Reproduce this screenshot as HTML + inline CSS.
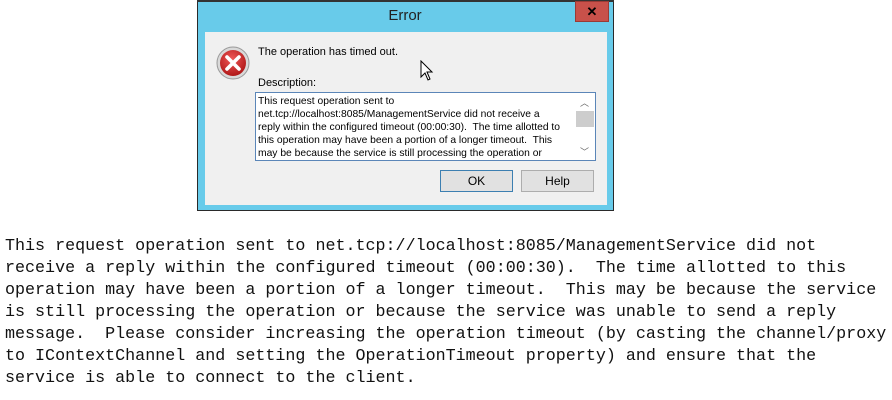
<!DOCTYPE html>
<html><head><style>
body{margin:0;width:892px;height:400px;background:#fff;position:relative;overflow:hidden;font-family:"Liberation Sans",sans-serif}
.a{position:absolute}
.mono{font-family:"Liberation Mono",monospace;font-size:16.7px;line-height:22px;color:#111;white-space:pre;left:5px;top:236px}
.ui{font-size:11px;color:#000}
</style></head><body>
<div class="a" style="left:197px;top:0;width:417px;height:211px;background:#68cbea;border:1px solid #2a2a2a;box-sizing:border-box"></div>
<div class="a" style="left:197px;top:0;width:417px;height:2px;background:#333"></div>
<div class="a" style="left:205px;top:32px;width:402px;height:173px;background:#f0f0f0"></div>
<div class="a" style="left:385px;top:7px;width:40px;text-align:center;font-size:15px;color:#222">Error</div>
<div class="a" style="left:575px;top:1px;width:34px;height:21px;background:#c8514a;border:1px solid #9a3a35;box-sizing:border-box;color:#000;font-weight:bold;font-size:13px;text-align:center;line-height:19px">✕</div>
<svg class="a" style="left:216px;top:46px" width="34" height="34" viewBox="0 0 34 34">
<defs><radialGradient id="g" cx="45%" cy="35%" r="65%"><stop offset="0" stop-color="#f05858"/><stop offset="1" stop-color="#b01818"/></radialGradient></defs>
<circle cx="17" cy="17" r="16" fill="#d9d9d9" stroke="#999"/>
<circle cx="17" cy="17" r="13" fill="url(#g)"/>
<path d="M11 11L23 23M23 11L11 23" stroke="#fff" stroke-width="3.6" stroke-linecap="round"/>
</svg>
<div class="a ui" style="left:258px;top:46px">The operation has timed out.</div>
<div class="a ui" style="left:258px;top:77px">Description:</div>
<div class="a" style="left:255px;top:92px;width:341px;height:69px;background:#fff;border:1px solid #5b86b8;box-sizing:border-box"></div>
<div class="a ui" style="left:258px;top:95px;width:318px;font-size:10.3px;line-height:13px;white-space:pre">This request operation sent to
net.tcp://localhost:8085/ManagementService did not receive a
reply within the configured timeout (00:00:30).  The time allotted to
this operation may have been a portion of a longer timeout.  This
may be because the service is still processing the operation or</div>
<div class="a" style="left:576px;top:93px;width:18px;height:67px;background:#fff"></div>
<div class="a" style="left:576px;top:111px;width:18px;height:16px;background:#cdcdcd"></div>
<div class="a" style="left:580px;top:96px;font-size:9px;color:#666">︿</div>
<div class="a" style="left:580px;top:145px;font-size:9px;color:#666">﹀</div>
<div class="a ui" style="left:440px;top:170px;width:73px;height:22px;background:#e1e1e1;border:1px solid #3c7fb1;box-sizing:border-box;text-align:center;line-height:20px;font-size:12px">OK</div>
<div class="a ui" style="left:521px;top:170px;width:73px;height:22px;background:#e1e1e1;border:1px solid #adadad;box-sizing:border-box;text-align:center;line-height:20px;font-size:12px">Help</div>
<svg class="a" style="left:420px;top:60px" width="14" height="22"><path d="M1 1L1 17L5 13L8 20L10 19L7 12L12 12Z" fill="#fff" stroke="#000"/></svg>
<div class="a mono">This request operation sent to net.tcp://localhost:8085/ManagementService did not
receive a reply within the configured timeout (00:00:30).  The time allotted to this
operation may have been a portion of a longer timeout.  This may be because the service
is still processing the operation or because the service was unable to send a reply
message.  Please consider increasing the operation timeout (by casting the channel/proxy
to IContextChannel and setting the OperationTimeout property) and ensure that the
service is able to connect to the client.</div>
</body></html>
